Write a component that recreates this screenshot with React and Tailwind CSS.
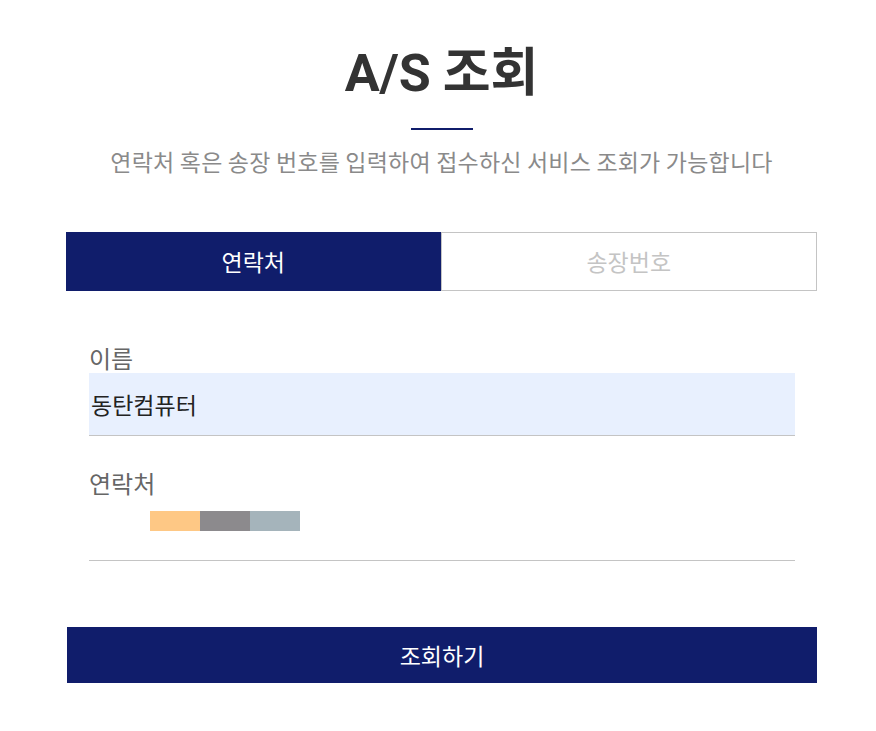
import React, { useState } from "react";

const font = { fontFamily: '"Noto Sans CJK KR", "Noto Sans", sans-serif' };

const App = () => {
  const [tab, setTab] = useState("phone");
  const [name, setName] = useState("동탄컴퓨터");

  return (
    <div className="min-h-[731px] w-[876px] bg-white" style={font}>
      <div className="ml-[66px] w-[751px] pt-[34px]">
        {/* 제목 */}
        <h1 className="text-center text-[52px] font-bold leading-[70px] text-[#333]">
          <span className="font-['Roboto']">A/S</span> 조회
        </h1>
        <div className="mx-auto mt-[19px] h-[2px] w-[62px] bg-[#101d6b]" />
        <p className="mt-[16px] text-center text-[23px] leading-[30px] tracking-[0.2px] text-[#8a8a8a]">
          연락처 혹은 송장 번호를 입력하여 접수하신 서비스 조회가 가능합니다
        </p>

        {/* 탭 */}
        <div className="mt-[56px] flex h-[59px]">
          <button
            onClick={() => setTab("phone")}
            className={`flex-1 text-[23px] ${
              tab === "phone"
                ? "bg-[#101d6b] text-white"
                : "border border-[#c4c4c4] text-[#c4c4c4]"
            }`}
          >
            연락처
          </button>
          <button
            onClick={() => setTab("invoice")}
            className={`flex-1 text-[23px] ${
              tab === "invoice"
                ? "bg-[#101d6b] text-white"
                : "border border-[#c4c4c4] text-[#c4c4c4]"
            }`}
          >
            송장번호
          </button>
        </div>

        {/* 입력 폼 */}
        <div className="mt-[52px] pl-[23px] pr-[22px]">
          <label className="block text-[24px] leading-[30px] text-[#666]">이름</label>
          <input
            className="block h-[63px] w-full border-b border-[#c4c4c4] bg-[#e8f0fe] px-[2px] text-[23px] text-[#222] outline-none"
            value={name}
            onChange={(e) => setName(e.target.value)}
          />

          <label className="mt-[32px] block text-[24px] leading-[30px] text-[#666]">연락처</label>
          <div className="flex h-[63px] flex-col border-b border-[#c4c4c4]">
            <div className="ml-[61px] mt-[13px] flex h-[20px]">
              <div className="w-[50px] bg-[#fec885]" />
              <div className="w-[50px] bg-[#8c8a8d]" />
              <div className="w-[50px] bg-[#a5b4bb]" />
            </div>
          </div>
        </div>

        <button className="ml-[1px] mt-[66px] h-[56px] w-[750px] bg-[#101d6b] text-[23px] text-white">
          조회하기
        </button>
      </div>
    </div>
  );
};

export default App;
